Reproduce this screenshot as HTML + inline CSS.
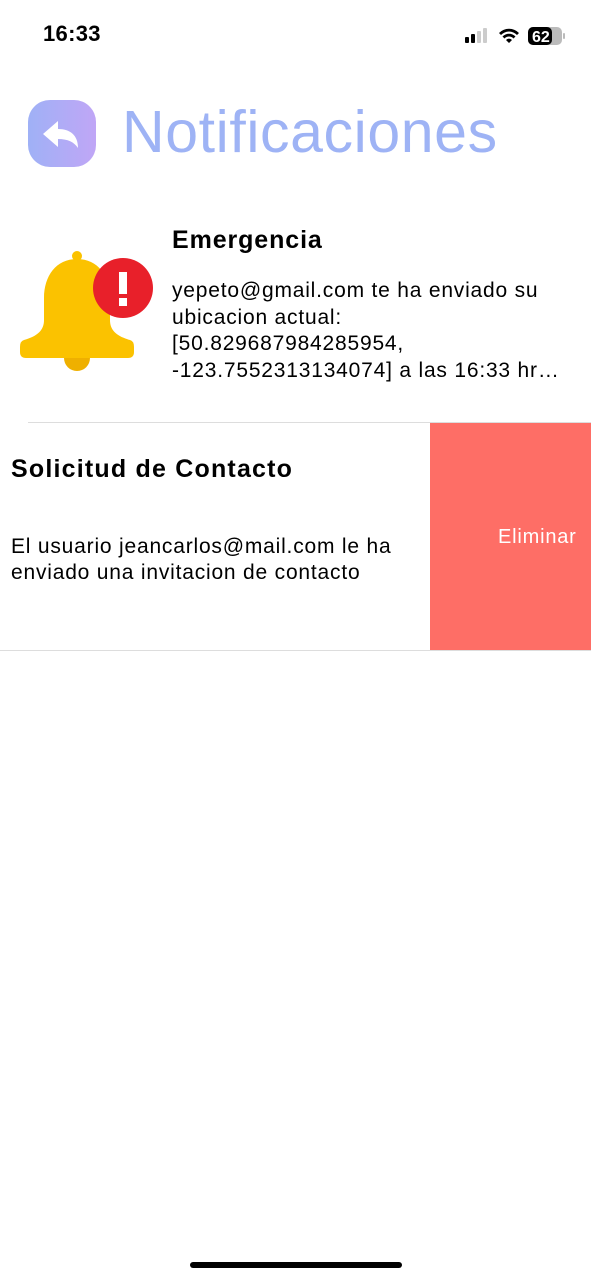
<!DOCTYPE html>
<html><head><meta charset="utf-8"><style>
body{margin:0;width:591px;height:1280px;background:#fff;font-family:"Liberation Sans",Arial,sans-serif;position:relative;overflow:hidden;color:#000}
.a{position:absolute}
</style></head><body>
<div class="a" style="left:43px;top:21px;font-size:22px;font-weight:bold;letter-spacing:0.3px">16:33</div>
<svg class="a" style="left:464px;top:26px" width="104" height="20" viewBox="0 0 104 20">
<rect x="1" y="11" width="4" height="6" rx="1" fill="#000"/>
<rect x="7" y="8" width="4" height="9" rx="1" fill="#000"/>
<rect x="13" y="5" width="4" height="12" rx="1" fill="#ccc"/>
<rect x="19" y="2" width="4" height="15" rx="1" fill="#ccc"/>
<path d="M35 7a14 14 0 0 1 20 0l-2 2a11 11 0 0 0-16 0zM38.5 10.5a9 9 0 0 1 13 0l-2 2a6 6 0 0 0-9 0zM42 14a4 4 0 0 1 6 0l-3 3z" fill="#000"/>
<rect x="64" y="1" width="34" height="18" rx="5" fill="#bbb"/>
<rect x="64" y="1" width="24" height="18" rx="5" fill="#000"/>
<rect x="99" y="7" width="2" height="6" rx="1" fill="#bbb"/>
<text x="68" y="16" font-family="Liberation Sans" font-weight="bold" font-size="16" fill="#fff">62</text>
</svg>
<svg class="a" style="left:28px;top:100px" width="68" height="67" viewBox="0 0 68 67">
<defs><linearGradient id="g" x1="0" y1="0" x2="1" y2="0"><stop offset="0" stop-color="#9fb1f6"/><stop offset="1" stop-color="#c0a6f6"/></linearGradient></defs>
<rect width="68" height="67" rx="22" fill="url(#g)"/>
<path d="M15 34 L30 21 L30 29 C42 29 50 35 50 48 C46 42 40 39 30 39 L30 47 Z" fill="#fff"/>
</svg>
<div class="a" style="left:122px;top:98px;font-size:59px;color:#9eb3f5;letter-spacing:0.6px">Notificaciones</div>
<svg class="a" style="left:18px;top:250px" width="140" height="125" viewBox="0 0 140 125">
<circle cx="59" cy="6" r="5" fill="#fbc200"/>
<path d="M59 9 C38 9 26 26 26 48 L26 70 C26 80 20 86 6 90 Q2 91 2 97 L2 102 Q2 108 8 108 L110 108 Q116 108 116 102 L116 97 Q116 91 112 90 C98 86 92 80 92 70 L92 48 C92 26 80 9 59 9 Z" fill="#fbc200"/>
<path d="M46 108 A13 13 0 0 0 72 108 Z" fill="#efb000"/>
<circle cx="105" cy="38" r="30" fill="#e8202a"/>
<rect x="101" y="22" width="8" height="22" fill="#fff"/>
<rect x="101" y="48" width="8" height="8" fill="#fff"/>
</svg>
<div class="a" style="left:172px;top:226px;font-size:25px;font-weight:bold;letter-spacing:0.9px">Emergencia</div>
<div class="a" style="left:172px;top:278px;font-size:21px;line-height:26.5px;width:419px;letter-spacing:0.8px;white-space:nowrap">yepeto@gmail.com te ha enviado su<br>ubicacion actual:<br>[50.829687984285954,<br>-123.7552313134074] a las 16:33 hr…</div>
<div class="a" style="left:28px;top:422px;width:563px;height:1px;background:#ddd"></div>
<div class="a" style="left:430px;top:423px;width:161px;height:227px;background:#fe6e66"></div>
<div class="a" style="left:498px;top:526px;font-size:20px;color:#fff;letter-spacing:0.8px">Eliminar</div>
<div class="a" style="left:11px;top:455px;font-size:25px;font-weight:bold;letter-spacing:1.2px;white-space:nowrap">Solicitud de Contacto</div>
<div class="a" style="left:11px;top:534px;font-size:21px;line-height:26px;letter-spacing:0.8px;white-space:nowrap">El usuario jeancarlos@mail.com le ha<br>enviado una invitacion de contacto</div>
<div class="a" style="left:0;top:650px;width:591px;height:1px;background:#ddd"></div>
<div class="a" style="left:190px;top:1262px;width:212px;height:6px;border-radius:3px;background:#000"></div>
</body></html>
